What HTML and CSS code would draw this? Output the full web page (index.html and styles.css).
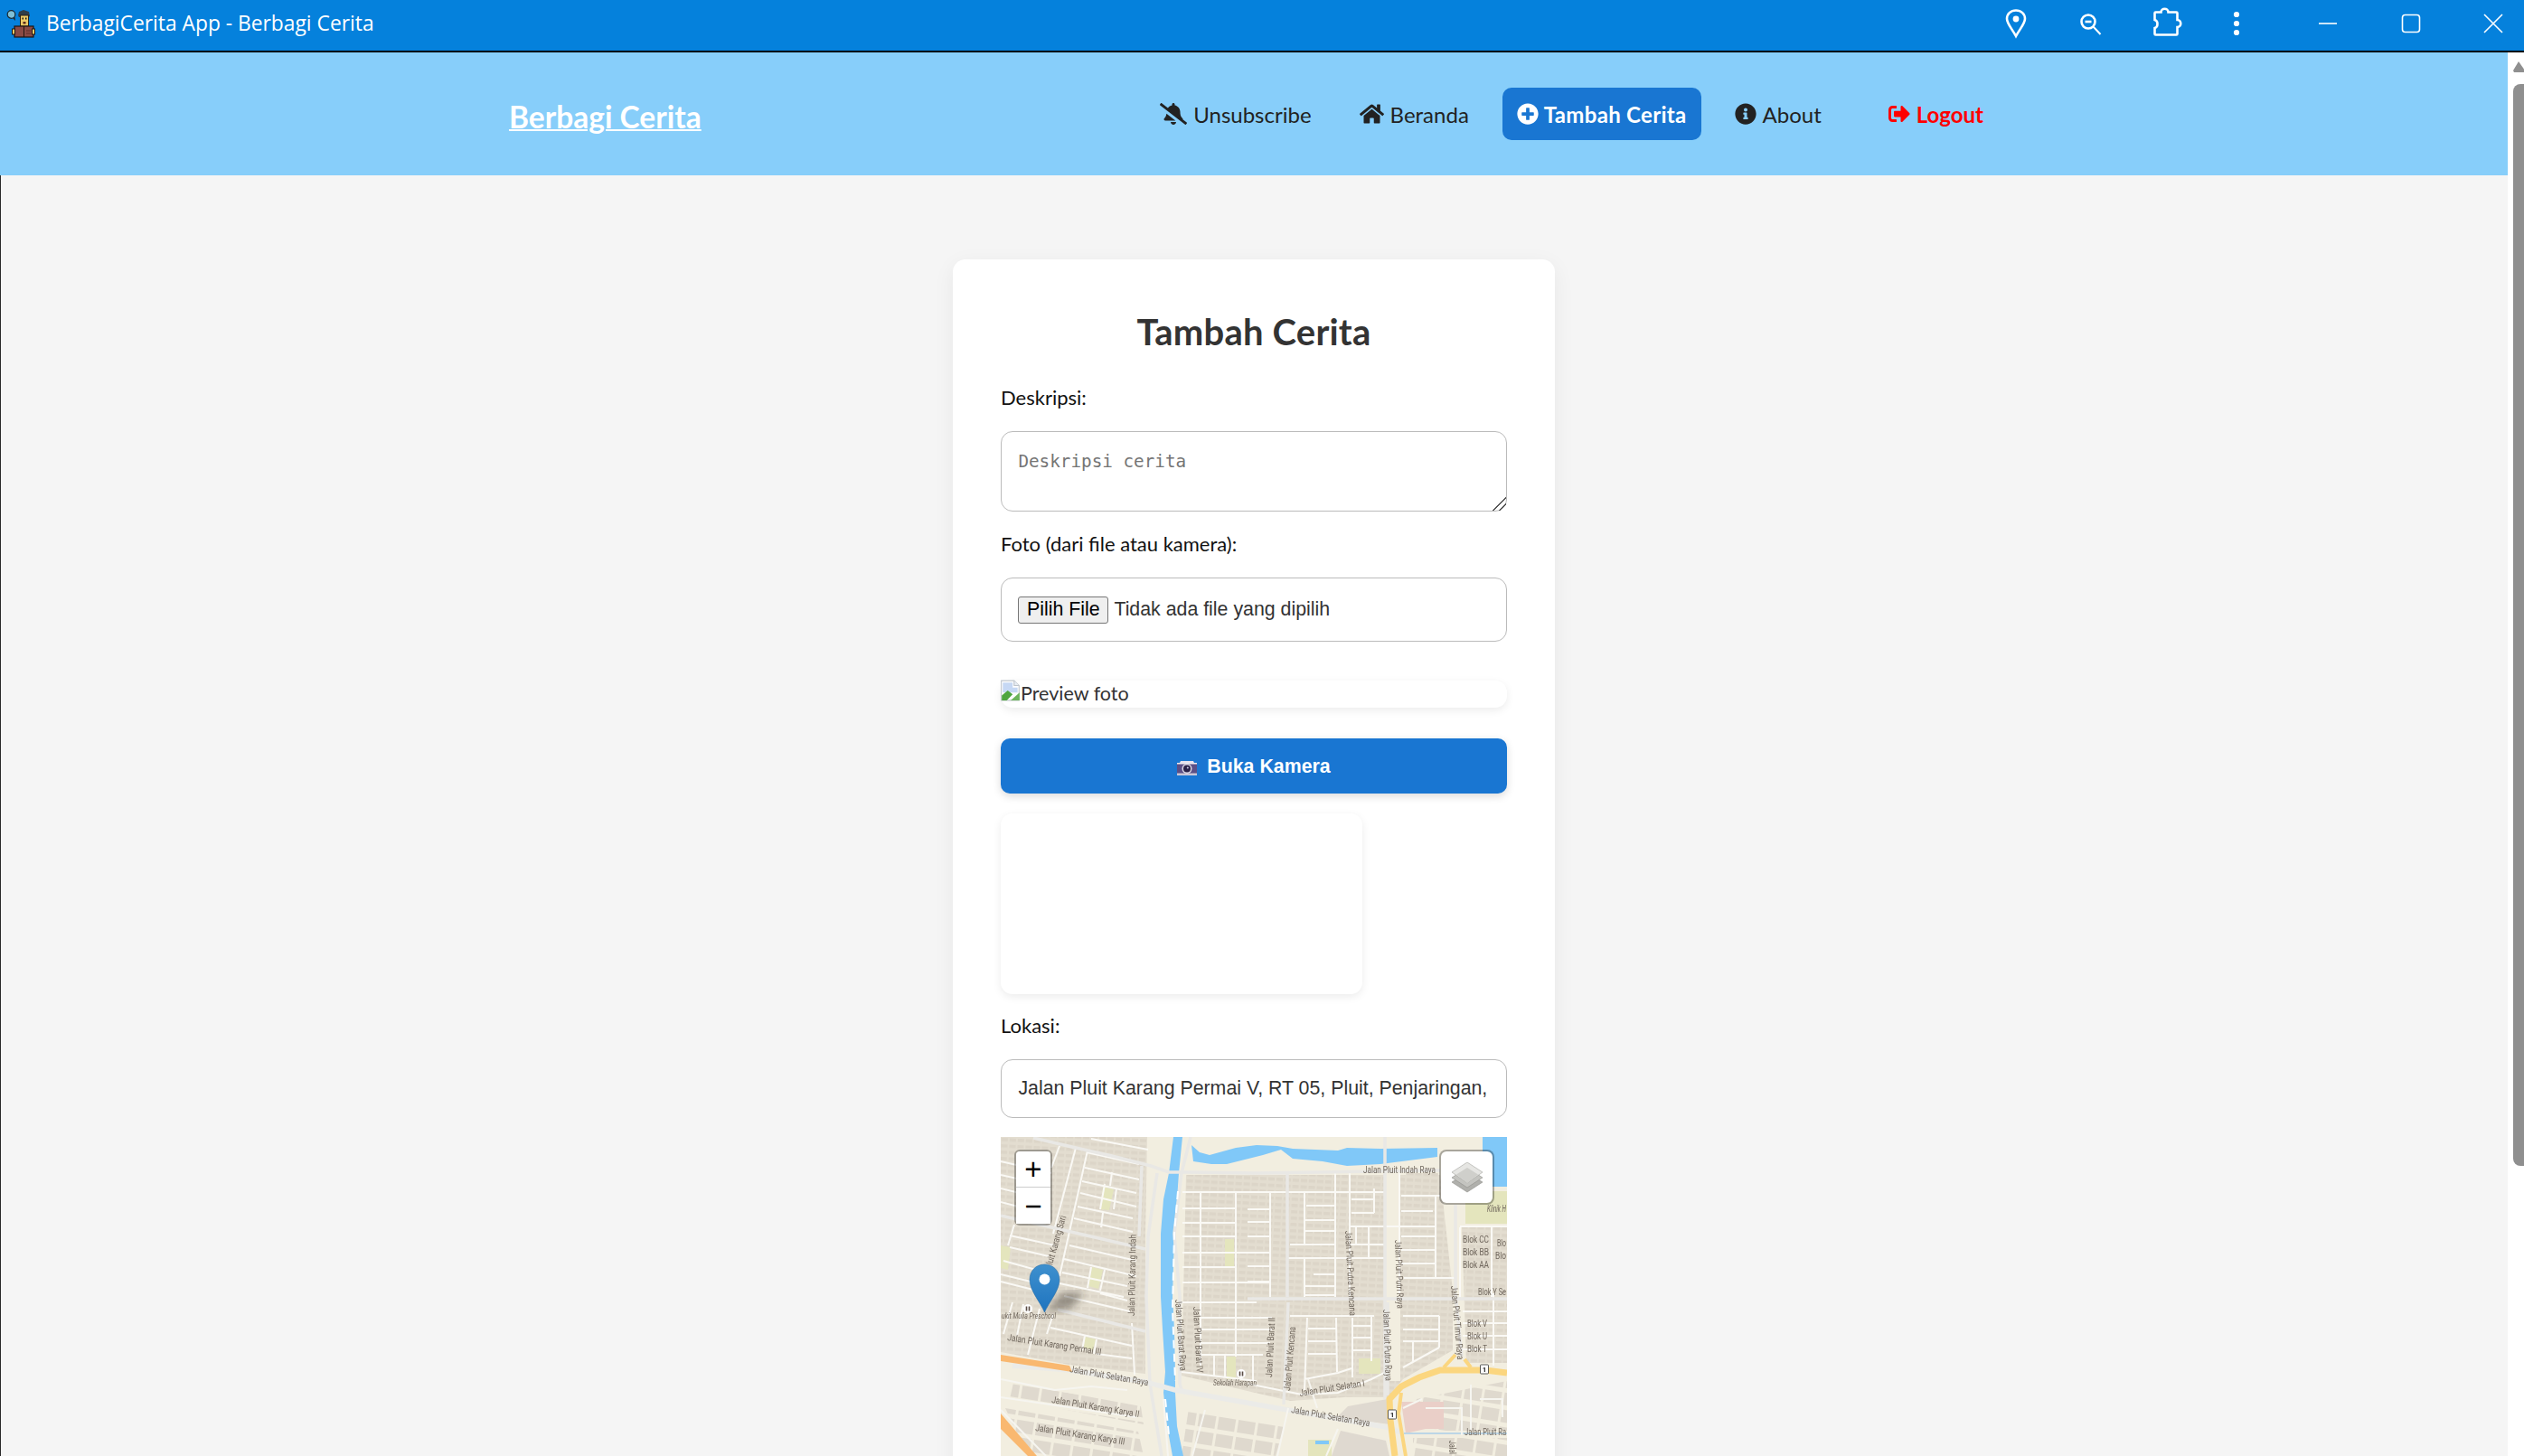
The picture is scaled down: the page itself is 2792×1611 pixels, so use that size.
FILE: index.html
```html
<!DOCTYPE html>
<html lang="id">
  <head>
    <meta charset="UTF-8" />
    <meta name="viewport" content="width=device-width, initial-scale=1.0" />
    <title>BerbagiCerita App - Berbagi Cerita</title>
    <link rel="stylesheet" href="styles.css">
  </head>
  <body>
    <div class="window">
      <div class="titlebar">
        <div class="app-title">
          <svg class="app-icon" viewBox="0 0 32 32">
            <circle cx="5.500" cy="6" r="4.300" fill="#7fc0d6" stroke="#1c2a33" stroke-width="1.200"/>
            <path d="M7 10l3 3-.5-4z" fill="#1c2a33"/>
            <path d="M13 7l1-4 5-2 6 2 1 5-2 1H14z" fill="#2f3d48"/>
            <rect x="15.500" y="7" width="9" height="12" fill="#ecca66" stroke="#2a2118" stroke-width="1"/>
            <rect x="17.500" y="9.500" width="1.500" height="2" fill="#1c1c1c"/>
            <rect x="21" y="9.500" width="1.500" height="2" fill="#1c1c1c"/>
            <rect x="18.500" y="14" width="3" height="2.500" fill="#5a2a1c"/>
            <rect x="9" y="19" width="21" height="12" fill="#8a4a44" stroke="#1f1512" stroke-width="1.200"/>
            <rect x="6.500" y="22" width="3" height="6" fill="#ecca66" stroke="#1f1512" stroke-width="1"/>
            <rect x="28.500" y="22" width="3" height="6" fill="#ecca66" stroke="#1f1512" stroke-width="1"/>
            <path d="M19.500 19v12" stroke="#1f1512" stroke-width="1"/>
            <path d="M22 24h5M22 27h5" stroke="#5e2c28" stroke-width="1"/>
          </svg>
          <span>BerbagiCerita App - Berbagi Cerita</span>
        </div>
        <div class="tb-actions">
          <svg class="tb-icon" viewBox="0 0 32 32"><path d="M16 1.500c-5.800 0-10 4-10 9.300 0 5.500 6 11.500 10 19.200 4-7.700 10-13.700 10-19.200 0-5.300-4.200-9.300-10-9.300z" class="tb-line"/><circle cx="16" cy="11" r="3.400" fill="#fff"/></svg>
          <svg class="tb-icon" viewBox="0 0 32 32"><circle cx="14" cy="14" r="7.500" class="tb-line"/><path d="M10.500 14h7" class="tb-line"/><path d="M19.500 19.500l8 8.500" class="tb-line tb-handle"/></svg>
          <svg class="tb-icon" viewBox="0.500 6.500 32 32"><path d="M7 10h6c0-5 8-5 8 0h9a1 1 0 0 1 1 1v7.500c5 0 5 8 0 8V34a1 1 0 0 1-1 1H7a1 1 0 0 1-1-1v-6.500c4-1 4-8 0-9V11a1 1 0 0 1 1-1z" class="tb-line"/></svg>
          <svg class="tb-icon" viewBox="0 0 32 32"><circle cx="14" cy="6" r="3.100" fill="#fff"/><circle cx="14" cy="16" r="3.100" fill="#fff"/><circle cx="14" cy="26" r="3.100" fill="#fff"/></svg>
        </div>
        <div class="tb-controls">
          <svg class="tb-icon" viewBox="0 0 32 32"><path d="M6 16h20" class="tb-thin"/></svg>
          <svg class="tb-icon" viewBox="0 0 32 32"><rect x="6.500" y="6.500" width="19" height="19" rx="3" class="tb-thin"/></svg>
          <svg class="tb-icon" viewBox="0 0 32 32"><path d="M6 6l20 20M26 6L6 26" class="tb-thin"/></svg>
        </div>
      </div>

      <div class="viewport">
        <div class="page">
          <header class="navbar">
            <div class="nav-inner">
              <a class="brand" href="#">Berbagi Cerita</a>
              <nav class="nav-links">
                <a class="nav-link" href="#">
                  <svg class="fa" viewBox="0 0 640 512"><path d="M633.82 458.1l-90.62-70.05c.19-1.38.8-2.66.8-4.06.05-7.55-2.61-15.27-8.61-21.71-19.32-20.76-55.47-51.99-55.47-154.29 0-77.7-54.48-139.9-127.94-155.16V32c0-17.67-14.32-32-31.98-32s-31.98 14.33-31.98 32v20.84c-40.33 8.38-74.66 31.07-97.59 62.57L45.47 3.37C38.49-2.05 28.43-.8 23.01 6.18L3.37 31.45C-2.05 38.42-.8 48.47 6.18 53.9l588.35 454.73c6.98 5.43 17.03 4.17 22.46-2.81l19.64-25.27c5.42-6.97 4.17-17.02-2.81-22.45zM157.23 251.54c-8.61 67.96-36.41 93.33-52.62 110.75-6 6.45-8.66 14.16-8.61 21.71.11 16.4 12.98 32 32.1 32h241.92L157.23 251.54zM320 512c35.32 0 63.97-28.65 63.97-64H256.03c0 35.35 28.65 64 63.97 64z"/></svg>
                  Unsubscribe
                </a>
                <a class="nav-link" href="#">
                  <svg class="fa" viewBox="0 0 576 512"><path d="M280.37 148.26L96 300.11V464a16 16 0 0 0 16 16l112.06-.29a16 16 0 0 0 15.92-16V368a16 16 0 0 1 16-16h64a16 16 0 0 1 16 16v95.64a16 16 0 0 0 16 16.05L464 480a16 16 0 0 0 16-16V300L295.67 148.26a12.19 12.19 0 0 0-15.3 0zM571.6 251.47L488 182.56V44.05a12 12 0 0 0-12-12h-56a12 12 0 0 0-12 12v72.61L318.47 43a48 48 0 0 0-61 0L4.34 251.47a12 12 0 0 0-1.6 16.9l25.5 31A12 12 0 0 0 45.15 301l235.22-193.74a12.19 12.19 0 0 1 15.3 0L530.9 301a12 12 0 0 0 16.9-1.6l25.5-31a12 12 0 0 0-1.7-16.93z"/></svg>
                  Beranda
                </a>
                <a class="nav-link active" href="#">
                  <svg class="fa" viewBox="0 0 512 512"><path d="M256 8C119 8 8 119 8 256s111 248 248 248 248-111 248-248S393 8 256 8zm144 276c0 6.600-5.400 12-12 12h-92v92c0 6.600-5.400 12-12 12h-56c-6.600 0-12-5.400-12-12v-92h-92c-6.600 0-12-5.400-12-12v-56c0-6.600 5.400-12 12-12h92v-92c0-6.600 5.400-12 12-12h56c6.600 0 12 5.400 12 12v92h92c6.600 0 12 5.400 12 12v56z"/></svg>
                  Tambah Cerita
                </a>
                <a class="nav-link" href="#">
                  <svg class="fa" viewBox="0 0 512 512"><path d="M256 8C119.043 8 8 119.083 8 256c0 136.997 111.043 248 248 248s248-111.003 248-248C504 119.083 392.957 8 256 8zm0 110c23.196 0 42 18.804 42 42s-18.804 42-42 42-42-18.804-42-42 18.804-42 42-42zm56 254c0 6.627-5.373 12-12 12h-88c-6.627 0-12-5.373-12-12v-24c0-6.627 5.373-12 12-12h12v-64h-12c-6.627 0-12-5.373-12-12v-24c0-6.627 5.373-12 12-12h64c6.627 0 12 5.373 12 12v100h12c6.627 0 12 5.373 12 12v24z"/></svg>
                  About
                </a>
                <a class="nav-link logout" href="#">
                  <svg class="fa" viewBox="0 0 512 512"><path d="M497 273L329 441c-15 15-41 4.500-41-17v-96H152c-13.300 0-24-10.700-24-24v-96c0-13.300 10.700-24 24-24h136V88c0-21.400 25.900-32 41-17l168 168c9.300 9.400 9.300 24.600 0 34zM192 436v-40c0-6.600-5.400-12-12-12H96c-17.700 0-32-14.300-32-32V160c0-17.700 14.300-32 32-32h84c6.600 0 12-5.400 12-12V76c0-6.600-5.400-12-12-12H96c-53 0-96 43-96 96v192c0 53 43 96 96 96h84c6.600 0 12-5.400 12-12z"/></svg>
                  Logout
                </a>
              </nav>
            </div>
          </header>

          <main class="content">
            <form class="card">
              <h2 class="card-title">Tambah Cerita</h2>

              <label class="field-label" for="deskripsi">Deskripsi:</label>
              <textarea class="field field-area" id="deskripsi" placeholder="Deskripsi cerita"></textarea>

              <label class="field-label gap-top">Foto (dari file atau kamera):</label>
              <div class="field file-field">
                <button class="file-btn" type="button">Pilih File</button>
                <span class="file-name">Tidak ada file yang dipilih</span>
              </div>

              <div class="preview">
                <svg class="broken-img" viewBox="0 0 20 22">
                  <path d="M.5 1h13l5 5v15H.5z" fill="#fff" stroke="#bfc5cc"/>
                  <path d="M13.500 1v5h5" fill="#e8edf3" stroke="#bfc5cc"/>
                  <path d="M2 3h10v5h5v5L2 13z" fill="#c6d8f4"/>
                  <path d="M1 21v-5l6-5 5 4-6 6z" fill="#4fa63f"/>
                  <path d="M19 21h-9l9-8z" fill="#6db45c"/>
                </svg>
                <span>Preview foto</span>
              </div>

              <button class="camera-btn" type="button">
                <svg class="camera-icon" viewBox="0 0 22 17">
                  <rect x="0" y="3" width="22" height="14" fill="#5b4f86"/>
                  <path d="M3 3l1-2h14l1 2z" fill="#e6e2ee"/>
                  <rect x="0" y="14.500" width="22" height="2.500" fill="#c9c6d6"/>
                  <rect x="0" y="3" width="22" height="1.500" fill="#efedf4"/>
                  <circle cx="11" cy="9.500" r="5.500" fill="#d9d6e4"/>
                  <circle cx="11" cy="9.500" r="4" fill="#2a2148"/>
                  <circle cx="11.800" cy="8.500" r="1" fill="#c9c6e0"/>
                </svg>
                Buka Kamera
              </button>

              <div class="video-box"></div>

              <label class="field-label gap-top-sm" for="lokasi">Lokasi:</label>
              <input class="field field-input" id="lokasi" type="text" value="Jalan Pluit Karang Permai V, RT 05, Pluit, Penjaringan, Jakarta Utara" />

              <div class="map">
                <svg class="map-tiles" viewBox="0 0 560 353">
                  <defs>
                    <pattern id="houses" width="9" height="7" patternUnits="userSpaceOnUse" patternTransform="rotate(3)">
                      <rect width="9" height="7" fill="#e3ddd0"/>
                      <rect x="1" y="1" width="7" height="3.500" fill="#dcd5c8"/>
                    </pattern>
                    <pattern id="sheds" width="22" height="19" patternUnits="userSpaceOnUse" patternTransform="rotate(9)">
                      <rect width="22" height="19" fill="#f2eee0"/>
                      <rect x="1" y="2" width="19" height="14" fill="#dfd9ce"/>
                    </pattern>
                    <linearGradient id="pinFill" x1="0" y1="0" x2="0" y2="1">
                      <stop offset="0" stop-color="#3e90ce"/>
                      <stop offset="1" stop-color="#1f74bf"/>
                    </linearGradient>
                    <filter id="pinBlur"><feGaussianBlur stdDeviation="4"/></filter>
                  </defs>

                  <rect width="560" height="353" class="m-sand"/>

                  <!-- blok perumahan -->
                  <path class="m-block" d="M0 0H162L160 110 160 262 76 252 0 238Z"/>
                  <path class="m-block" d="M205 42H486L500 170V236L445 268 428 288 380 288 320 292 200 264Z"/>
                  <path class="m-block" d="M510 100H560V250H515Z"/>
                  <path class="m-block" d="M448 40H484V64H448Z"/>
                  <path class="m-block2" d="M14 272L155 298 158 318 10 290Z"/>
                  <path class="m-block2" d="M5 300L152 326 158 353H30Z"/>
                  <path class="m-block2" d="M208 300L314 318 304 353H200Z"/>
                  <path class="m-block3" d="M384 298L428 290 430 318 372 310Z"/>
                  <path class="m-block3" d="M376 325L426 336 430 353H366Z"/>
                  <path class="m-block2" d="M460 290L560 270V325H454Z"/>
                  <path class="m-block2" d="M456 333H560V353H456Z"/>
                  <path class="m-sand" d="M426 40H442V270H426Z"/>
                  <path class="m-park" d="M113 55L125 58 120 81 110 80Z"/>
                  <path class="m-park" d="M101 144L113 147 108 168 97 165Z"/>
                  <path class="m-park" d="M0 120L11 122 8 147 0 145Z"/>
                  <path class="m-park" d="M93 221L105 224 102 236 92 233Z"/>
                  <path class="m-park" d="M248 113H258V143H248Z"/>
                  <path class="m-park" d="M250 243H260V268H250Z"/>
                  <path class="m-park" d="M396 245H420V262H396Z"/>
                  <path class="m-park" d="M514 60H560V96H514Z"/>
                  <path class="m-park" d="M340 335H366V353H340Z"/>
                  <path class="m-pink" d="M443 293H490V323H470L448 328Z"/>

                  <!-- air -->
                  <path class="m-water" d="M191 0H201L197 40 195 69 192 107 190 177 192 213 193 260 193 283 195 320 202 353H190L184 320 180 283 182 260 179 213 177 177 177 107 180 69 186 40Z"/>
                  <path class="m-water" d="M211 9L220 17 231 20 260 12 283 9 306 10 323 13 373 15 383 12 420 13 483 12V22L420 30 383 32 356 27 323 24 310 14 290 20 250 30 233 30 213 27Z"/>
                  <path class="m-water" d="M533 0H560V55H533Z"/>
                  <path class="m-water" d="M348 336H363V340H348Z"/>

                  <!-- jalan -->
                  <path class="m-road-white" d="M95 17L153 30M93 34L153 47M90 49L150 62M88 62L150 77M85 77L146 90M81 90L146 105M76 120L150 137M70 135L150 154M68 150L140 165M65 162L136 177M0 27L56 40M0 42L53 54M0 57L50 69M0 72L46 84M10 109L60 120M10 122L53 132M3 137L50 150M0 152L33 160M0 160L36 169M100 2L163 14M96 15L65 154M83 12L58 107M65 10L56 34M15 97L8 120M123 39L121 54M115 52L110 80M128 57L125 80M113 84L111 100M100 144L96 167M115 147L110 170M110 173L140 181M70 176L143 193M55 211L145 231M106 240L145 245M145 206L148 263M13 183L3 218M25 185L18 220M43 190L30 241M58 196L51 218M93 220L90 236M106 224L103 240"/>
                  <path class="m-road-white" d="M201 61H425M201 79H260M201 95H260M201 110H260M201 128H298M201 144H260M201 161H298M273 80H298M338 76H370M336 92H370M336 104H370M273 94H298M273 110H298M273 143H298M273 160H298M388 69H413M388 84H413M386 99H480M320 119H370M386 119H425M318 134H425M346 152H370M336 165H370M336 175H370M221 61V253M260 61V243M298 60V177M336 60V119M336 134V177M370 40V177M386 40V177M413 57V84M393 100V119M407 99V134M441 40V173M481 65V155M443 65H486M443 82H478M443 110H480M443 125H480M443 140H480M446 156H503M508 100V177M508 99H560M543 100V177"/>
                  <path class="m-road-white" d="M200 183H283M220 200H283M220 213H283M220 228H283M220 241H283M200 260L283 270M236 241V264M248 241V266M279 241V270M273 200H300M320 198H413M340 212H371M340 226H371M340 240H371M390 209H410M390 222H410M390 236H410M273 213H300M273 228H298M273 241H290M339 200L336 280M371 200L372 260M389 200V266M410 198V248M485 198V233M445 198H485M445 213H485M445 226H485M456 226V248M445 255L485 233M545 173V253M511 193H560M511 206H560M511 220H560M511 235H560M273 273L313 281 333 285 373 283 410 268 426 260M336 268L373 261 388 256"/>
                  <path class="m-road-grey" d="M36 1L83 12 123 21 166 32 186 39H206L283 40 486 37M210 0L200 40 192 107 198 177 198 273 201 283M0 87L160 124M173 40L163 110 161 177 165 273 178 353M156 32L153 110M63 191L160 215M317 40V177M425 0V290M503 75V170M503 173L510 243M273 179H560M318 183L313 296M428 183V286"/>
                  <path class="m-road-main" d="M13 253L76 258 160 271 193 280 283 296 323 303 426 321 446 328"/>
                  <path class="m-road-blue" d="M446 328H560"/>
                  <path class="m-road-thin" d="M0 268L60 280 100 276 140 280M0 288L150 310M0 302L50 353M185 353L180 290M212 353L226 302M318 300L306 353M373 323L360 353M340 268L350 300M445 300L466 290M470 300H510V330M520 274V325M530 290H555V310"/>
                  <path class="m-road-dash" d="M196 60L192 107 190 190 193 270M182 290L186 330"/>

                  <path class="m-motor" d="M0 241L76 253 79 260 53 256 0 248Z"/>
                  <path class="m-motor" d="M0 306L40 353H30L0 323Z"/>
                  <path class="m-yellow" d="M560 261L536 258H486L463 266 443 276 430 290 431 313 436 353"/>
                  <path class="m-yellow m-yellow-sm" d="M443 283L440 306 448 353"/>
                  <path class="m-yellow m-yellow-sm" d="M503 241L490 255M513 246L520 255"/>

                  <!-- label jalan -->
                  <text class="m-label" x="401" y="40" textLength="80" lengthAdjust="spacingAndGlyphs">Jalan Pluit Indah Raya</text>
                  <text class="m-label m-italic" x="538" y="83" textLength="21" lengthAdjust="spacingAndGlyphs">Klinik H</text>
                  <text class="m-label" x="511" y="117" textLength="29" lengthAdjust="spacingAndGlyphs">Blok CC</text>
                  <text class="m-label" x="511" y="131" textLength="29" lengthAdjust="spacingAndGlyphs">Blok BB</text>
                  <text class="m-label" x="511" y="145" textLength="29" lengthAdjust="spacingAndGlyphs">Blok AA</text>
                  <text class="m-label" x="549" y="121" textLength="10" lengthAdjust="spacingAndGlyphs">Blo</text>
                  <text class="m-label" x="547" y="135" textLength="12" lengthAdjust="spacingAndGlyphs">Blo</text>
                  <text class="m-label" x="528" y="175" textLength="31" lengthAdjust="spacingAndGlyphs">Blok Y Se</text>
                  <text class="m-label" x="516" y="210" textLength="22" lengthAdjust="spacingAndGlyphs">Blok V</text>
                  <text class="m-label" x="516" y="224" textLength="22" lengthAdjust="spacingAndGlyphs">Blok U</text>
                  <text class="m-label" x="516" y="238" textLength="22" lengthAdjust="spacingAndGlyphs">Blok T</text>
                  <text class="m-label" transform="translate(57 142) rotate(-74)" textLength="56" lengthAdjust="spacingAndGlyphs">luit Karang Sari</text>
                  <text class="m-label" transform="translate(148 198) rotate(-89)" textLength="90" lengthAdjust="spacingAndGlyphs">Jalan Pluit Karang Indah</text>
                  <text class="m-label" transform="translate(193 180) rotate(86)" textLength="79" lengthAdjust="spacingAndGlyphs">Jalan Pluit Barat Raya</text>
                  <text class="m-label" transform="translate(213 188) rotate(87)" textLength="73" lengthAdjust="spacingAndGlyphs">Jalan Pluit Barat IV</text>
                  <text class="m-label" transform="translate(300 266) rotate(-87)" textLength="66" lengthAdjust="spacingAndGlyphs">Jalan Pluit Barat II</text>
                  <text class="m-label" transform="translate(320 281) rotate(-85)" textLength="71" lengthAdjust="spacingAndGlyphs">Jalan Pluit Kencana</text>
                  <text class="m-label" transform="translate(381 104) rotate(87)" textLength="94" lengthAdjust="spacingAndGlyphs">Jalan Pluit Putra Kencana</text>
                  <text class="m-label" transform="translate(436 114) rotate(88)" textLength="76" lengthAdjust="spacingAndGlyphs">Jalan Pluit Putri Raya</text>
                  <text class="m-label" transform="translate(423 191) rotate(88)" textLength="79" lengthAdjust="spacingAndGlyphs">Jalan Pluit Putra Raya</text>
                  <text class="m-label" transform="translate(498 165) rotate(85)" textLength="82" lengthAdjust="spacingAndGlyphs">Jalan Pluit Timur Raya</text>
                  <text class="m-label" transform="translate(7 225) rotate(9)" textLength="105" lengthAdjust="spacingAndGlyphs">Jalan Pluit Karang Permai III</text>
                  <text class="m-label m-small m-italic" x="1" y="201" textLength="60" lengthAdjust="spacingAndGlyphs">ukit Mulia Preschool</text>
                  <text class="m-label" transform="translate(76 260) rotate(10)" textLength="88" lengthAdjust="spacingAndGlyphs">Jalan Pluit Selatan Raya</text>
                  <text class="m-label" transform="translate(56 294) rotate(9.500)" textLength="98" lengthAdjust="spacingAndGlyphs">Jalan Pluit Karang Karya II</text>
                  <text class="m-label" transform="translate(38 325) rotate(9)" textLength="100" lengthAdjust="spacingAndGlyphs">Jalan Pluit Karang Karya III</text>
                  <text class="m-label m-small m-italic" x="235" y="275" textLength="48" lengthAdjust="spacingAndGlyphs">Sekolah Harapan</text>
                  <text class="m-label" transform="translate(331 287) rotate(-9)" textLength="73" lengthAdjust="spacingAndGlyphs">Jalan Pluit Selatan I</text>
                  <text class="m-label" transform="translate(321 305) rotate(10)" textLength="88" lengthAdjust="spacingAndGlyphs">Jalan Pluit Selatan Raya</text>
                  <text class="m-label" x="513" y="330" textLength="46" lengthAdjust="spacingAndGlyphs">Jalan Pluit Ra</text>
                  <text class="m-label" transform="translate(496 336) rotate(88)" textLength="15" lengthAdjust="spacingAndGlyphs">Jalal</text>

                  <!-- perisai & ikon sekolah -->
                  <rect class="m-shield" x="530.500" y="252" width="9" height="10" rx="1"/>
                  <text class="m-shield-text" x="535" y="260">1</text>
                  <rect class="m-shield" x="428.500" y="302" width="9" height="10" rx="1"/>
                  <text class="m-shield-text" x="433" y="310">1</text>
                  <circle class="m-poi" cx="30" cy="190" r="5"/>
                  <path class="m-poi-mark" d="M28.500 187.500v5M31.500 187.500v5"/>
                  <circle class="m-poi" cx="266" cy="262" r="5"/>
                  <path class="m-poi-mark" d="M264.500 259.500v5M267.500 259.500v5"/>

                  <!-- penanda -->
                  <path class="m-pin-shadow" d="M48 194L68 172 92 172 78 190Z" filter="url(#pinBlur)"/>
                  <path class="m-pin" d="M48.500 194C44 183 32 170 32 158 32 148 39 141 48.500 141S65 148 65 158C65 170 53 183 48.500 194Z"/>
                  <circle cx="48.500" cy="157.500" r="6" fill="#fff"/>
                </svg>

                <div class="zoom-ctl">
                  <a class="zoom-btn zoom-in" href="#">+</a>
                  <a class="zoom-btn" href="#">−</a>
                </div>
                <div class="layers-ctl">
                  <svg class="layers-icon" viewBox="0 0 36 34">
                    <path d="M18 11L35 22 18 33 1 22Z" fill="#b0b0ac" stroke="#8f8f8a" stroke-width=".6"/>
                    <path d="M18 6L35 17 18 28 1 17Z" fill="#c4c4c0" stroke="#8f8f8a" stroke-width=".6"/>
                    <path d="M18 0L35 11 18 23 1 11Z" fill="#e6e6e3" stroke="#a5a5a0" stroke-width=".6"/>
                    <path d="M18 6L30 13.500 18 23 6 13.500Z" fill="#cfcfcb"/>
                  </svg>
                </div>
              </div>
            </form>
          </main>
        </div>

        <div class="scrollbar">
          <svg class="scroll-arrow" viewBox="0 0 12 14"><path d="M6 1L12 9.500V13H1L0 11Z" fill="#8f8f8f"/></svg>
          <div class="scroll-thumb"></div>
        </div>
      </div>
    </div>
  </body>
</html>
```

FILE: styles.css
```css
* {
  box-sizing: border-box;
}

html,
body {
  height: 100%;
}

body {
  margin: 0;
  overflow: hidden;
  font-family: "Lato", "Noto Sans", sans-serif;
  color: #222;
  background: #f5f5f5;
}

.window {
  height: 100vh;
  display: flex;
  flex-direction: column;
}

/* title bar */
.titlebar {
  flex: none;
  height: 58px;
  padding: 0 18px 5px 0;
  display: flex;
  align-items: center;
  background: #0581dc;
  border-bottom: 2px solid #000;
  color: #fff;
}

.app-title {
  flex: 1;
  display: flex;
  align-items: center;
  padding-left: 7px;
  gap: 12px;
  font-family: "Open Sans", sans-serif;
  font-size: 22.8px;
}

.app-icon {
  width: 32px;
  height: 32px;
}

.tb-actions,
.tb-controls {
  display: flex;
  align-items: center;
}

.tb-actions {
  gap: 50px;
  margin-right: 67px;
}

.tb-controls {
  gap: 59.5px;
}

.tb-icon {
  width: 32px;
  height: 32px;
  overflow: visible;
}

.tb-line {
  fill: none;
  stroke: #fff;
  stroke-width: 2.6;
}

.tb-handle {
  stroke-width: 2;
}

.tb-thin {
  fill: none;
  stroke: #fff;
  stroke-width: 1.6;
}

/* page */
.viewport {
  flex: 1;
  min-height: 0;
  display: flex;
}

.page {
  flex: 1;
  min-width: 0;
  overflow: hidden;
  box-shadow: inset 2px 0 0 -1px #2a2a2a;
}

.navbar {
  height: 136px;
  display: flex;
  align-items: center;
  justify-content: center;
  background: #87cefa;
}

.nav-inner {
  width: 1646px;
  display: flex;
  align-items: center;
  justify-content: space-between;
}

.brand {
  margin-top: 5px;
  margin-left: -1px;
  font-size: 33.5px;
  font-weight: 700;
  color: #fff;
  text-decoration: underline;
  text-decoration-thickness: 2px;
}

.nav-links {
  display: flex;
  align-items: center;
  gap: 21px;
}

.nav-link {
  height: 58px;
  padding: 0 16px;
  display: flex;
  align-items: center;
  gap: 7px;
  border-radius: 10px;
  font-size: 24px;
  color: #222;
  text-decoration: none;
}

.fa {
  height: 24px;
  width: auto;
  fill: currentColor;
}

.nav-link.active {
  background: #1976d2;
  color: #fff;
  font-weight: 700;
  letter-spacing: 0.3px;
  gap: 6px;
}

.nav-link.logout {
  margin-left: 21px;
  color: #f00;
  font-weight: 700;
}

.scrollbar {
  flex: none;
  width: 18px;
  padding: 9px 0 0 6px;
  display: flex;
  flex-direction: column;
  background: #fff;
}

.scroll-arrow {
  width: 12px;
  height: 14px;
}

.scroll-thumb {
  height: 1197px;
  margin-top: 12px;
  background: #8f8f8f;
  border-radius: 8px 0 0 8px;
}

/* form card */
.content {
  display: flex;
  justify-content: center;
  padding-top: 93px;
}

.card {
  width: 666px;
  padding: 55px 53px 60px;
  display: flex;
  flex-direction: column;
  align-items: flex-start;
  background: #fff;
  border-radius: 14px;
  box-shadow: 0 6px 24px rgba(0, 0, 0, 0.06);
}

.card-title {
  align-self: center;
  margin: 0 0 33px;
  font-size: 40px;
  line-height: 50px;
  font-weight: 700;
  letter-spacing: 0.2px;
  color: #333;
}

.field-label {
  display: block;
  height: 30px;
  margin-bottom: 22px;
  font-size: 22px;
  line-height: 30px;
  color: #111;
}

.gap-top {
  margin-top: 21px;
}

.gap-top-sm {
  margin-top: 20px;
}

.field {
  width: 100%;
  background: #fff;
  border: 1.6px solid #bbb;
  border-radius: 13px;
}

.field-area {
  display: block;
  height: 89px;
  padding: 21px 18.4px;
  font-family: "DejaVu Sans Mono", monospace;
  font-size: 19.3px;
  outline: none;
}

.field-area::-webkit-resizer {
  background: linear-gradient(135deg, transparent 48%, #555 48%, #555 55%, transparent 55%, transparent 72%, #555 72%, #555 79%, transparent 79%);
}

.file-field {
  height: 71px;
  padding: 0 18.4px;
  display: flex;
  align-items: center;
  gap: 6px;
}

.file-btn {
  width: 100px;
  height: 30px;
  padding: 0;
  font-family: "Liberation Sans", Arial, sans-serif;
  font-size: 21.33px;
  color: #000;
  background: #efefef;
  border: 1.5px solid #767676;
  border-radius: 3px;
}

.file-name {
  font-family: "Liberation Sans", Arial, sans-serif;
  font-size: 21.33px;
  color: #333;
}

.preview {
  width: 100%;
  height: 30px;
  margin-top: 43px;
  display: flex;
  align-items: flex-start;
  font-size: 21.5px;
  line-height: 29px;
  color: #333;
  background: #fff;
  border-radius: 13px;
  box-shadow: 0 3px 10px rgba(0, 0, 0, 0.08);
}

.broken-img {
  flex: none;
  width: 22px;
  height: 24px;
  margin-top: -1px;
}

.camera-btn {
  width: 100%;
  height: 61px;
  margin-top: 34px;
  padding-top: 2px;
  display: flex;
  align-items: center;
  justify-content: center;
  gap: 11px;
  font-family: "Liberation Sans", Arial, sans-serif;
  font-size: 21.33px;
  font-weight: 700;
  color: #fff;
  background: #1976d2;
  border: none;
  border-radius: 10px;
  box-shadow: 0 3px 10px rgba(0, 0, 0, 0.15);
}

.camera-icon {
  width: 22px;
  height: 17px;
  margin-top: 3px;
}

.video-box {
  width: 400px;
  height: 200px;
  margin-top: 22px;
  background: #fff;
  border-radius: 13px;
  box-shadow: 0 3px 10px rgba(0, 0, 0, 0.08);
}

.field-input {
  height: 65px;
  padding: 0 18.4px;
  font-family: "Liberation Sans", Arial, sans-serif;
  font-size: 21.33px;
  color: #333;
  outline: none;
}

/* map */
.map {
  position: relative;
  width: 100%;
  height: 353px;
  margin-top: 21px;
  overflow: hidden;
}

.map-tiles {
  display: block;
  width: 100%;
  height: 100%;
  filter: blur(0.45px);
}

.m-sand { fill: #f2eee0; }
.m-block { fill: url(#houses); }
.m-block2 { fill: url(#sheds); }
.m-block3 { fill: #dfd9d0; }
.m-park { fill: #e4e5bd; }
.m-pink { fill: #eacfc8; }
.m-water { fill: #80c8f8; }
.m-motor { fill: #f9b870; }

.m-road-white,
.m-road-grey,
.m-road-main,
.m-road-blue,
.m-road-thin,
.m-road-dash,
.m-yellow {
  fill: none;
}

.m-road-white { stroke: #faf9f5; stroke-width: 2; }
.m-road-grey { stroke: #e9e8e5; stroke-width: 3.5; }
.m-road-main { stroke: #ebebe8; stroke-width: 5.5; }
.m-road-blue { stroke: #bcd6e6; stroke-width: 2; }
.m-road-thin { stroke: #f6f5f0; stroke-width: 2; }
.m-road-dash { stroke: #fff; stroke-width: 2; stroke-dasharray: 9 6; }
.m-yellow { stroke: #fbd67f; stroke-width: 7; }
.m-yellow-sm { stroke-width: 4; }

.m-label {
  font-family: "Roboto", sans-serif;
  font-size: 10.5px;
  fill: #6f665c;
}

.m-small { font-size: 8.5px; }
.m-italic { font-style: italic; }

.m-shield { fill: #fff; stroke: #333; stroke-width: 0.8; }
.m-shield-text {
  font-family: "Roboto", sans-serif;
  font-size: 8px;
  font-weight: 700;
  text-anchor: middle;
  fill: #222;
}

.m-poi { fill: #fff; }
.m-poi-mark { fill: none; stroke: #5a4c44; stroke-width: 1.6; }
.m-pin { fill: url(#pinFill); stroke: #2a6fa8; stroke-width: 0.6; }
.m-pin-shadow { fill: rgba(60, 55, 45, 0.45); }

.zoom-ctl {
  position: absolute;
  top: 14px;
  left: 15px;
  width: 42px;
  display: flex;
  flex-direction: column;
  border: 2px solid rgba(0, 0, 0, 0.3);
  border-radius: 6px;
  background-clip: padding-box;
}

.zoom-btn {
  height: 40px;
  display: flex;
  align-items: center;
  justify-content: center;
  font-family: "Liberation Sans", Arial, sans-serif;
  font-size: 33px;
  font-weight: 400;
  line-height: 1;
  color: #000;
  text-decoration: none;
  background: #fff;
}

.zoom-in {
  border-bottom: 1px solid #ccc;
  border-radius: 4px 4px 0 0;
}

.layers-ctl {
  position: absolute;
  top: 14px;
  left: 485px;
  width: 61px;
  height: 61px;
  display: flex;
  align-items: center;
  justify-content: center;
  background: #fff;
  background-clip: padding-box;
  border: 2px solid rgba(0, 0, 0, 0.3);
  border-radius: 8px;
}

.layers-icon {
  width: 36px;
  height: 34px;
}
```
